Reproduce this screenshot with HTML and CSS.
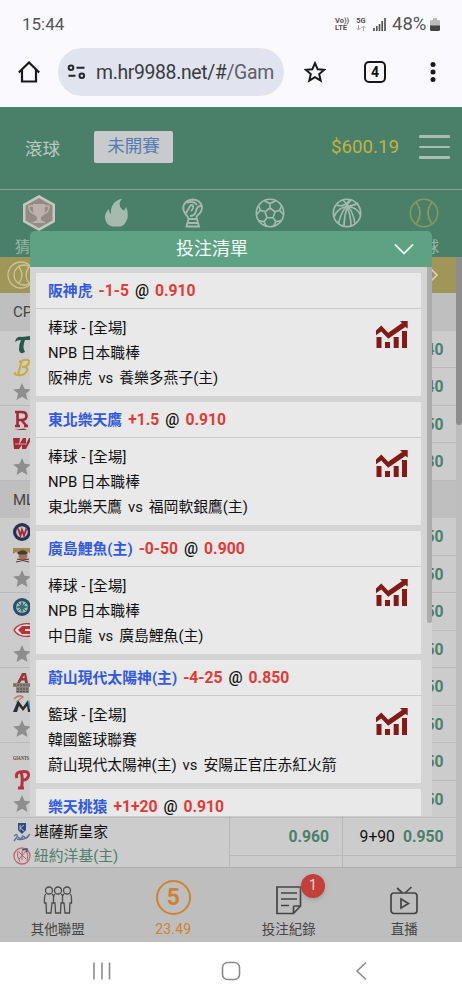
FILE: index.html
```html
<!DOCTYPE html>
<html lang="zh-Hant">
<head>
<meta charset="utf-8">
<title>投注清單</title>
<link rel="stylesheet" href="styles.css">
</head>
<body>
<svg class="defs" width="0" height="0">
  <symbol id="star" viewBox="0 0 18 18"><path fill="#8e8e8e" d="M9 0l2.500 5.800 6.300.6-4.800 4.200 1.500 6.400L9 13.700 3.500 17 5 10.600.2 6.400l6.300-.6z"/></symbol>
  <symbol id="chart" viewBox="0 0 32 27"><g fill="#821a15"><path d="M.5 16h5v11h-5zM9 21h5v6H9zM17.700 16h5v11h-5zM26 10h5v17h-5z"/><path d="M0 9.500l5.300-5 6.900 7.300L26 2 24 0h7.700v7.500l-2.400-1.600L12.200 17.800 5.300 10.500 0 14.300z"/></g></symbol>
</svg>
<div class="phone">
  <header class="status">
    <span class="clock">15:44</span>
    <span class="volte"><span>Vo))</span><span>LTE</span></span>
    <span class="fiveg"><span>5G</span><svg width="10" height="6" viewBox="0 0 10 6"><path d="M2.500 0v5M.5 3l2 2 2-2M7.500 6V1M5.500 3l2-2 2 2" fill="none" stroke="#aaa"/></svg></span>
    <svg class="signal" width="13" height="13" viewBox="0 0 13 13"><path d="M1 10v3M3.800 8v5M6.500 6v7M9.200 3v10M12 0v13" stroke="#555" stroke-width="1.700"/></svg>
    <span class="percent">48%</span>
    <svg class="battery" width="10" height="13" viewBox="0 0 10 13"><path d="M3 0h4v2h1.500Q10 2 10 3.500V8H0V3.500Q0 2 1.500 2H3z" fill="#bbb"/><path d="M0 7.500h10v4Q10 13 8.500 13h-7Q0 13 0 11.500z" fill="#444"/></svg>
  </header>
  <div class="browser">
    <svg class="home" width="22" height="22" viewBox="0 0 22 22"><path d="M.8 11.500L11 1.500l10.200 10M4 9v11.500h14V9" fill="none" stroke="#17181c" stroke-width="2.200"/></svg>
    <div class="address">
      <svg width="19" height="16" viewBox="0 0 19 16" fill="none" stroke="#24262c" stroke-width="2"><circle cx="4" cy="3.800" r="2.300"/><path d="M9.500 3.800h8M1.500 11.800h7"/><circle cx="14.800" cy="11.800" r="2.300"/></svg>
      <span class="url">m.hr9988.net/#<span class="path">/Gam</span></span>
    </div>
    <svg class="fav" width="22" height="22" viewBox="0 0 20 20"><path d="M10 2l2.400 5.500 6 .5-4.600 3.900 1.400 5.900L10 14.700l-5.200 3.100 1.400-5.900L1.600 8l6-.5z" fill="none" stroke="#17181c" stroke-width="1.800"/></svg>
    <span class="tabs">4</span>
    <svg class="dots" width="6" height="22" viewBox="0 0 6 22" fill="#17181c"><circle cx="3" cy="3.500" r="2.500"/><circle cx="3" cy="11" r="2.500"/><circle cx="3" cy="18.500" r="2.500"/></svg>
  </div>

  <main class="app">
    <div class="top">
      <span class="live">滾球</span>
      <span class="upcoming">未開賽</span>
      <span class="balance">$600.19</span>
      <span class="menu"><i></i><i></i><i></i></span>
    </div>
    <div class="sports">
      <svg width="36" height="38" viewBox="0 0 36 38"><path d="M18 1l16 9v18l-16 9-16-9V10z" fill="#c5c8c2"/><path d="M18 4l13.500 7.500v15L18 34 4.500 26.500v-15z" fill="#958a84"/><path d="M12 10h12v4q0 8-4 9v3l4 2v1H12v-1l4-2v-3q-4-1-4-9z" fill="#bbb3ab"/><path d="M12 12H8q0 7 6 8M24 12h4q0 7-6 8" fill="none" stroke="#bbb3ab" stroke-width="1.500"/></svg>
      <svg width="30" height="30" viewBox="0 0 30 30"><path d="M21 .5Q16 7 21 11q1 2 2.500 1l1.500-3q2.500 5 1.500 11-2 7-7 8.500h-8Q5 27 4 20q-.5-5 4-9 0 4 2 5Q9 4 21 .5z" fill="#a5bbae"/></svg>
      <svg width="30" height="30" viewBox="0 0 30 30" fill="none" stroke="#a5bbae" stroke-width="1.800"><path d="M10.500 21q0-2-3-5-3-4-2-8 2-6 9-6.500 8 .5 9.500 7 .5 5-5 9.500-1 1 0 3M10.500 21H19l2 7.500H8.500zM10 25h10M8 15l4-7q2-2 3 0t-2 5M23 8q-4 0-5 5t-6 5M9 5q6-3 10 2"/></svg>
      <svg width="30" height="30" viewBox="0 0 30 30" fill="none" stroke="#a5bbae" stroke-width="1.600"><circle cx="15" cy="15" r="13.700"/><path d="M15 10l5 3.800-2 6h-6l-2-6zM15 10V5.500M20 13.800l4.500-1.500M18 19.800l3 4M12 19.800l-3 4M10 13.800l-4.500-1.500M9.500 3l5.500 2.500L20.500 3M26.500 8l-2 4.300 4 4.200M3.500 8l2 4.300-4 4.200M3.500 22.500l5.500 1.300 2.500 4.500M26.500 22.500L21 23.800l-2.500 4.500"/></svg>
      <svg width="30" height="30" viewBox="0 0 30 30" fill="none" stroke="#a5bbae" stroke-width="1.600"><circle cx="15" cy="15" r="13.700"/><path d="M4.500 7q8 3 13.500-5.500M2 19Q5 10 15 8.500q7-1 11-3.500M6.500 25.500Q9 13 19 2M23 26Q21 11 11 2M12 28q0-10 3.500-19.500M19 28q0-10-4-19.500M28.500 17Q25 9 15 8.500"/></svg>
      <svg width="30" height="30" viewBox="0 0 30 30" fill="none" stroke="#8d9757" stroke-width="1.500"><circle cx="15" cy="15" r="13.700"/><path d="M7 4q8 11 0 22M23 4q-8 11 0 22M9 10l2-1M10 15h2M9 20l2 1M21 10l-2-1M20 15h-2M21 20l-2 1"/></svg>
      <span class="lab first">猜</span><span class="lab last">球</span>
    </div>
    <div class="list">
      <div class="rows">
        <div class="gold"><svg width="28" height="28" viewBox="0 0 28 28" fill="none" stroke="#cdc38e" stroke-width="1.300"><circle cx="14" cy="14" r="13"/><circle cx="17" cy="14" r="10"/><path d="M12 6q6 8 0 16M22 6q-6 8 0 16"/></svg><svg width="9" height="14" viewBox="0 0 9 14"><path d="M1 1l6 6-6 6" fill="none" stroke="#ddd6b5" stroke-width="1.600"/></svg></div>
        <div class="league">CP</div>
        <div class="match">
          <div class="marks">
            <svg viewBox="0 0 18 24"><path d="M2 10Q3 4 9 5l8-1v4h-5q-3 7 0 12-5 3-6-2 0-6 2-10-4 0-6 2z" fill="#26594b"/></svg>
            <svg viewBox="0 0 18 24"><path d="M9 4L5 19M6 6q11-5 10 1-2 4-7 4 7 0 5 4-3 5-9 4-4 0-3-3" fill="none" stroke="#c9ad40" stroke-width="2.200"/></svg>
            <svg viewBox="0 0 18 18"><use href="#star"/></svg>
          </div>
          <div class="cell"></div><div class="odds"><b>0.940</b><b>0.940</b></div>
        </div>
        <div class="match">
          <div class="marks">
            <svg viewBox="0 0 18 24"><path d="M4.500 19V5h4q5 0 5 4t-5 4h-4m4 0l5 6M2 5h4M2 19h5M11 19h4" fill="none" stroke="#a32835" stroke-width="2.600"/><path d="M1 23h13l-3-1.500z" fill="#a32835"/></svg>
            <svg viewBox="0 0 18 24"><path d="M0 7h7l-1 7 4-7h3v6l3-6h3l-6 11H9v-4l-3 4H1z" fill="#a32835"/><path d="M2 13h12" stroke="#c9a6a8"/></svg>
            <svg viewBox="0 0 18 18"><use href="#star"/></svg>
          </div>
          <div class="cell"></div><div class="odds"><b>0.950</b><b>0.980</b></div>
        </div>
        <div class="league">ML</div>
        <div class="match">
          <div class="marks">
            <svg viewBox="0 0 18 24"><circle cx="9" cy="13" r="9" fill="#27304f"/><circle cx="9" cy="13" r="5.800" fill="#c8c1c4"/><path d="M5 9.500l2.500 7L9 11l2 5.500 2.500-7" fill="none" stroke="#9f293c" stroke-width="1.800"/></svg>
            <svg viewBox="0 0 18 24"><path d="M0 5h18v6l-3-2-3 2H6L3 9l-3 2z" fill="#a5854d"/><circle cx="10" cy="13" r="4.500" fill="#a86e60"/><path d="M5 10q5-4 9 0l-2 1H6zM3 19l13-3M4 16l12 3" stroke="#443d3a" stroke-width="1.200" fill="#443d3a"/></svg>
            <svg viewBox="0 0 18 18"><use href="#star"/></svg>
          </div>
          <div class="cell"></div><div class="odds"><b>0.950</b><b>0.950</b></div>
        </div>
        <div class="match">
          <div class="marks">
            <svg viewBox="0 0 18 24"><circle cx="9" cy="13" r="9" fill="#264e65"/><circle cx="9" cy="13" r="6" fill="#a2b9bb"/><path d="M9 6l1.500 5.500L16 13l-5.500 1.500L9 20l-1.500-5.500L2 13l5.500-1.500z" fill="#347378"/><path d="M5 9l8 8M13 9l-8 8" stroke="#347378"/></svg>
            <svg viewBox="0 0 18 24"><path d="M18 6Q6 4 1 12q4 8 17 6" fill="#ddd" stroke="#b83039" stroke-width="1.400"/><path d="M18 8H9l-4 4 4 4h9v-3h-6v-2h6z" fill="#b83039"/></svg>
            <svg viewBox="0 0 18 18"><use href="#star"/></svg>
          </div>
          <div class="cell"></div><div class="odds"><b>0.950</b><b>0.950</b></div>
        </div>
        <div class="match">
          <div class="marks">
            <svg viewBox="0 0 18 24"><path d="M4 14L9 4h4l2 10h-3l-.5-2.500H8.500L7 14zM9.500 9h2V6z" fill="#98363b"/><path d="M0 14h18v4h-2v6H3v-6H0z" fill="#8b857e"/><path d="M1 16h16M4 20h11M4 22.500h11" stroke="#504c49" stroke-dasharray="2 1"/></svg>
            <svg viewBox="0 0 18 24"><path d="M0 19l5-12 5 7 5-7 3 12h-3l-1-6-4 5-4-5-2 6z" fill="#292e36"/><path d="M1 6q5-5 9-2L3 9" fill="none" stroke="#b78275" stroke-width="1.500"/><path d="M15.500 8l1.500 8" stroke="#4894ae" stroke-width="1.500"/></svg>
            <svg viewBox="0 0 18 18"><use href="#star"/></svg>
          </div>
          <div class="cell"></div><div class="odds"><b>0.950</b><b>0.950</b></div>
        </div>
        <div class="match">
          <div class="marks">
            <svg viewBox="0 0 18 24"><text x="0" y="16" class="giants" textLength="16" lengthAdjust="spacingAndGlyphs">GIANTS</text></svg>
            <svg viewBox="0 0 18 24"><path d="M8.500 20Q10 11 8.500 5M4 10Q2 5 7 4q9-2 8.500 3.500-1 5-6.500 4.500M5 20h6" fill="none" stroke="#b5323c" stroke-width="3"/></svg>
            <svg viewBox="0 0 18 18"><use href="#star"/></svg>
          </div>
          <div class="cell"></div><div class="odds"><b>0.950</b><b>0.950</b></div>
        </div>
        <div class="match">
          <div class="teams">
            <div><svg width="18" height="20" viewBox="0 0 18 20"><path d="M5 1h8v7l-4 4-4-4z" fill="#2d4c80"/><path d="M7 3v5M11 3L7 6l4 3" stroke="#b8bdc5" fill="none"/><path d="M1 14q4-3 3 1l-3 4M5 15l3 2 2-3 3 2 4-4M4 17q6 2 12-3" fill="none" stroke="#5c7394" stroke-width="1.400"/></svg>堪薩斯皇家</div>
            <div class="fav-team"><svg width="18" height="20" viewBox="0 0 18 20" fill="none"><circle cx="9" cy="10" r="8" stroke="#bd6f74" stroke-width="1.400"/><path d="M5 5q-2 5 2 11M13 4q3 5 1 11M9 5v9M6 6l7 7M6 13l7-8" stroke="#bd5c66"/><path d="M9 4l5-1v3" stroke="#44557e" stroke-width="1.500"/></svg>紐約洋基(主)</div>
          </div>
          <div class="cell mid"><b>0.960</b><b></b></div><div class="odds"><b><span>9+90</span>0.950</b><b></b></div>
        </div>
      </div>
      <div class="track"><i></i></div>
    </div>

    <section class="slip">
      <div class="slip-head"><span>投注清單</span><svg width="20" height="12" viewBox="0 0 20 12"><path d="M1 1.500l9 9 9-9" fill="none" stroke="#e8f3ee" stroke-width="1.800"/></svg></div>
      <div class="slip-body">
        <div class="cards">
          <article><h3><em>阪神虎</em><b>-1-5</b><span>@</span><b>0.910</b></h3><div class="info"><div><p>棒球 - [全場]</p><p>NPB 日本職棒</p><p>阪神虎<i>vs</i>養樂多燕子(主)</p></div><svg width="32" height="27"><use href="#chart"/></svg></div></article>
          <article><h3><em>東北樂天鷹</em><b>+1.5</b><span>@</span><b>0.910</b></h3><div class="info"><div><p>棒球 - [全場]</p><p>NPB 日本職棒</p><p>東北樂天鷹<i>vs</i>福岡軟銀鷹(主)</p></div><svg width="32" height="27"><use href="#chart"/></svg></div></article>
          <article><h3><em>廣島鯉魚(主)</em><b>-0-50</b><span>@</span><b>0.900</b></h3><div class="info"><div><p>棒球 - [全場]</p><p>NPB 日本職棒</p><p>中日龍<i>vs</i>廣島鯉魚(主)</p></div><svg width="32" height="27"><use href="#chart"/></svg></div></article>
          <article><h3><em>蔚山現代太陽神(主)</em><b>-4-25</b><span>@</span><b>0.850</b></h3><div class="info"><div><p>籃球 - [全場]</p><p>韓國籃球聯賽</p><p>蔚山現代太陽神(主)<i>vs</i>安陽正官庄赤紅火箭</p></div><svg width="32" height="27"><use href="#chart"/></svg></div></article>
          <article><h3><em>樂天桃猿</em><b>+1+20</b><span>@</span><b>0.910</b></h3></article>
        </div>
        <div class="thumb"></div>
      </div>
    </section>

    <nav class="bottom">
      <div><svg width="30" height="32" viewBox="0 0 30 32" fill="none" stroke="#4c4c4c" stroke-width="1.300"><circle cx="6" cy="6.500" r="3.500"/><circle cx="15" cy="6.500" r="3.500"/><circle cx="24" cy="6.500" r="3.500"/><path d="M3 10q-2 1-1.500 9H3l.5 10H8l1-10h1.500V13M12 10q-2 1-1.500 9H12l.5 10h5l.5-10h1.500V13M18 10q2 1 1.500 3M27 10q2 1 1.500 9H27l-.5 10H22l-1-10h-1.500V13M9 10q1.500 1 1.500 3M21 10q-1.500 1-1.500 3"/></svg><span>其他聯盟</span></div>
      <div class="count"><strong>5</strong><span>23.49</span></div>
      <div><svg width="30" height="32" viewBox="0 0 30 32" fill="none" stroke="#454545" stroke-width="1.700"><path d="M3 3h23.500v19l-7 7.500H3zM26.500 22h-6q-1 0-1 1v6.500M7 9h16M7 15h16M7 21.500h8"/></svg><span>投注紀錄</span><b class="badge">1</b></div>
      <div><svg width="30" height="32" viewBox="0 0 30 32" fill="none" stroke="#454545" stroke-width="1.700"><rect x="2" y="9" width="26" height="20.500" rx="3"/><path d="M8 4l5.500 5M22.500 3L16 9M12 15l7.500 4.500-7.500 4.500z"/></svg><span>直播</span></div>
    </nav>
  </main>
  <footer class="system">
    <svg width="18" height="20" viewBox="0 0 18 20"><path d="M1 1.500v17M9 1.500v17M16.500 1.500v17" stroke="#8b8b8b" stroke-width="1.600"/></svg>
    <svg width="20" height="20" viewBox="0 0 20 20"><rect x="1.500" y="1.500" width="17" height="17" rx="5" fill="none" stroke="#8b8b8b" stroke-width="1.600"/></svg>
    <svg width="12" height="20" viewBox="0 0 12 20"><path d="M11 1.500L2 10l9 8.500" fill="none" stroke="#8b8b8b" stroke-width="1.600"/></svg>
  </footer>
</div>
</body>
</html>
```
FILE: styles.css
```css
* { box-sizing: border-box; }
body { margin: 0; font-family: Roboto, "Noto Sans CJK TC", sans-serif; color: #111; }
.defs { position: absolute; }
i, em { font-style: normal; }
svg { display: block; flex: none; }
.phone { width: 462px; height: 1000px; display: flex; flex-direction: column; overflow: hidden; background: #fff; }
.status { height: 48px; background: #faf9fe; display: flex; align-items: center; padding: 0 22px 0 22px; color: #555; font-size: 17px; }
.clock { flex: 1; }
.volte, .fiveg { display: flex; flex-direction: column; font-size: 7.500px; line-height: 7.500px; font-weight: 700; }
.volte { width: 20px; }
.fiveg { width: 12px; gap: 1px; align-items: center; }
.signal { margin: 0 6px 0 6px; }
.percent { font-size: 18.500px; width: 38px; font-weight: 400; }
.browser { height: 58.500px; background: #faf9fe; display: flex; align-items: flex-start; }
.home { margin: 13px 0 0 18px; }
.address { width: 226px; height: 48px; margin: 0 0 0 18px; border-radius: 24px; background: #e1e4ee; display: flex; align-items: center; padding: 0 9px 0 9px; gap: 10px; }
.url { flex: 1; overflow: hidden; white-space: nowrap; font-size: 19.400px; letter-spacing: -.35px; color: #3a3b40; }
.path { color: #5c5f66; }
.fav { margin: 13px 0 0 20px; }
.tabs { width: 22px; height: 22px; border: 2px solid #17181c; border-radius: 5px; margin: 13px 0 0 38px; font-weight: 700; font-size: 14px; line-height: 18px; text-align: center; }
.dots { margin: 13px 0 0 44px; }
.app { height: 835.500px; position: relative; display: flex; flex-direction: column; background: #4a806a; }
.top { height: 83px; flex: none; border-bottom: 1px solid #81a593; display: flex; align-items: center; padding: 0 12px 1px 25px; }
.live { font-size: 17.500px; color: #b9cbc1; width: 69px; }
.upcoming { width: 79px; height: 32px; border-radius: 2px; background: #c9cacb; color: #557cb4; font-size: 17.500px; line-height: 31px; text-align: center; }
.balance { margin-left: auto; color: #bfb43e; font-size: 18.700px; }
.menu { width: 31px; margin-left: 20px; display: flex; flex-direction: column; gap: 8px; }
.menu i { height: 2.400px; background: #aabdb2; border-radius: 1px; }
.sports { height: 67.500px; flex: none; display: grid; grid-template-columns: repeat(6, 77px); grid-template-rows: 47px 20px; place-items: center; }
.lab { font-size: 15px; color: #9cb7a9; line-height: 20px; }
.first { grid-column: 1; justify-self: start; padding-left: 15px; }
.last { grid-column: 6; justify-self: end; padding-right: 23px; }
.list { flex: 1; min-height: 0; overflow: hidden; display: flex; background: #ccc; }
.rows { width: 456px; }
.track { width: 6px; background: #bdbdbd; }
.track i { display: block; height: 168px; background: #8d8d8d; border-radius: 0 0 3px 3px; }
.gold { height: 36px; background: #a0965a; display: flex; align-items: center; justify-content: space-between; padding: 0 17px 0 7px; }
.league { height: 37.500px; background: #bfbfbf; line-height: 38px; padding-left: 13px; font-size: 15px; color: #444; }
.match { height: 75px; display: flex; border-bottom: 1px solid #bababa; }
.marks { width: 229px; display: flex; flex-direction: column; padding: 1px 0 0 13px; }
.marks svg { width: 18px; height: 24px; }
.marks svg:last-child { height: 18px; margin-top: 3px; }
.cell { width: 113.500px; border-left: 1px solid #b8b8b8; border-right: 1px solid #b8b8b8; }
.odds { width: 113.500px; }
.odds b, .cell b { height: 37.500px; display: block; line-height: 37px; text-align: right; padding-right: 12.500px; font-size: 15.700px; color: #4b806b; }
.odds b:first-child, .cell b:first-child { border-bottom: 1px solid #bababa; }
.odds span { font-weight: 400; color: #111; margin-right: 8px; }
.teams { width: 229px; padding: 2px 0 0 13px; font-size: 14.800px; line-height: 24px; }
.teams div { display: flex; align-items: center; gap: 3px; height: 24px; }
.teams .fav-team { color: #4d806b; height: 23px; }
.giants { font: 700 6px "Liberation Serif", serif; fill: #503c32; }
.slip { position: absolute; left: 30px; top: 124.500px; width: 402px; height: 585px; border-radius: 5px 5px 0 0; overflow: hidden; display: flex; flex-direction: column; }
.slip-head { height: 36px; flex: none; background: #5ea284; color: #f4faf7; font-size: 18px; line-height: 24px; display: flex; align-items: center; padding: 0 18px 0 146px; justify-content: space-between; }
.slip-head span { padding-bottom: 1px; }
.slip-body { flex: 1; min-height: 0; background: #d4d4d4; display: flex; justify-content: space-between; overflow: hidden; }
.cards { width: 391px; padding: 6px 0 0 6px; display: flex; flex-direction: column; gap: 6px; }
article { background: #e9e9e9; width: 385px; height: 123.100px; flex: none; }
h3 { margin: 0; height: 36px; border-bottom: 1px solid #cbcbcb; padding-left: 12px; font-size: 15.700px; font-weight: 500; display: flex; align-items: center; gap: 6px; }
h3 em { color: #3159e2; font-size: 14.850px; font-weight: 700; padding-bottom: 2px; }
h3 b { color: #e33a35; }
.info { display: flex; justify-content: space-between; padding: 6.500px 13px 0 12px; }
.info svg { margin-top: 5px; }
p { margin: 0; font-size: 14.800px; line-height: 25.300px; white-space: nowrap; }
p i { margin: 0 6px; }
.thumb { width: 5px; height: 356px; background: #acacac; border-radius: 0 0 3px 3px; }
.bottom { height: 75px; flex: none; background: #bebebe; border-top: 1px solid #adadad; display: grid; grid-template-columns: repeat(4, 115.500px); }
.bottom > div { position: relative; display: flex; flex-direction: column; align-items: center; padding-top: 16px; font-size: 13.500px; color: #454545; }
.bottom span { line-height: 20px; margin-top: 3px; }
.bottom .count { color: #cd8330; padding-top: 12px; }
.count span { font-size: 14px; letter-spacing: .2px; }
.count strong { width: 35px; height: 35px; border: 2px solid #cd8330; border-radius: 50%; font-size: 23px; line-height: 31px; text-align: center; margin-bottom: 1px; }
.badge { position: absolute; left: 70px; top: 6px; width: 24px; height: 24px; border-radius: 50%; background: #c3403a; color: #eedcda; font-size: 14px; font-weight: 400; line-height: 23px; text-align: center; box-shadow: 0 2px 4px #8888; }
.system { height: 58px; display: grid; grid-template-columns: 128px 134px 12px; align-items: center; padding: 0 0 1px 93px; }
```
